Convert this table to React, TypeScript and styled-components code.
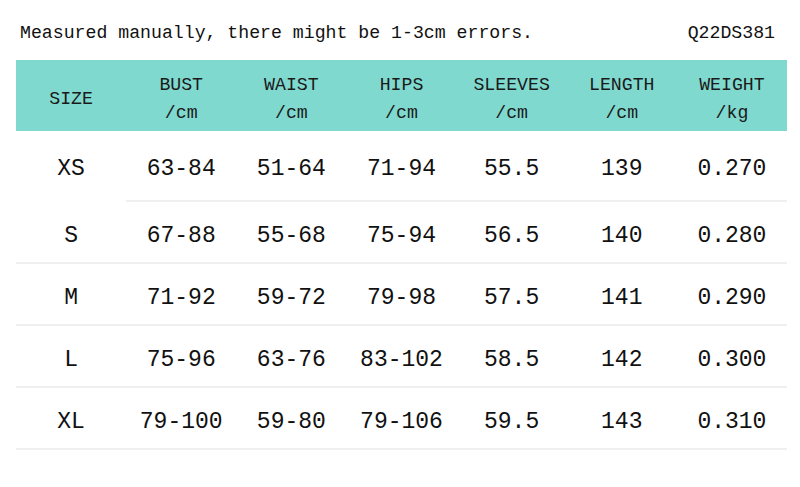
import styled, { createGlobalStyle } from "styled-components"

const GlobalStyle = createGlobalStyle`
  body {
    margin: 0;
    background: #fff;
    font-family: "Liberation Mono", "DejaVu Sans Mono", monospace;
    color: #111;
  }
`

const headers = [
  { title: "SIZE" },
  { title: "BUST", unit: "/cm" },
  { title: "WAIST", unit: "/cm" },
  { title: "HIPS", unit: "/cm" },
  { title: "SLEEVES", unit: "/cm" },
  { title: "LENGTH", unit: "/cm" },
  { title: "WEIGHT", unit: "/kg" },
]

const rows = [
  ["XS", "63-84", "51-64", "71-94", "55.5", "139", "0.270"],
  ["S", "67-88", "55-68", "75-94", "56.5", "140", "0.280"],
  ["M", "71-92", "59-72", "79-98", "57.5", "141", "0.290"],
  ["L", "75-96", "63-76", "83-102", "58.5", "142", "0.300"],
  ["XL", "79-100", "59-80", "79-106", "59.5", "143", "0.310"],
]

const SizeChart = () => {
  return (
    <Page>
      <GlobalStyle />
      <TopBar>
        <span>Measured manually, there might be 1-3cm errors.</span>
        <span>Q22DS381</span>
      </TopBar>
      <Table>
        <HeaderRow>
          {headers.map((h) => (
            <HeaderCell key={h.title}>
              <span>{h.title}</span>
              {h.unit && <span>{h.unit}</span>}
            </HeaderCell>
          ))}
        </HeaderRow>
        {rows.map((row, i) => (
          <Row key={row[0]} $first={i === 0}>
            {row.map((value, j) => (
              <Cell key={j} $plain={i === 0 && j === 0}>
                {value}
              </Cell>
            ))}
          </Row>
        ))}
      </Table>
    </Page>
  )
}

const Page = styled.div`
  width: 800px;
  height: 487px;
  box-sizing: border-box;
  padding: 0 13px 0 16px;
`

const TopBar = styled.div`
  height: 60px;
  box-sizing: border-box;
  padding: 21px 12px 0 4px;
  display: flex;
  justify-content: space-between;
  align-items: flex-start;
  font-size: 18.2px;
  line-height: 24px;
  color: #111;
`

const Table = styled.div`
  display: flex;
  flex-direction: column;
`

const HeaderRow = styled.div`
  display: grid;
  grid-template-columns: repeat(7, 1fr);
  height: 71px;
  background: #80d9cf;
`

const HeaderCell = styled.div`
  display: flex;
  flex-direction: column;
  align-items: center;
  justify-content: center;
  padding-top: 6px;
  box-sizing: border-box;
  font-size: 18.2px;
  line-height: 28px;
  color: #1a1a1a;
`

const Row = styled.div<{ $first?: boolean }>`
  display: grid;
  grid-template-columns: repeat(7, 1fr);
  height: ${(p) => (p.$first ? "71px" : "62px")};
`

const Cell = styled.div<{ $plain?: boolean }>`
  display: flex;
  align-items: center;
  justify-content: center;
  box-sizing: border-box;
  padding-top: 7px;
  border-bottom: 2px solid ${(p) => (p.$plain ? "transparent" : "#efefef")};
  font-size: 23px;
  color: #111;
`

export default SizeChart
